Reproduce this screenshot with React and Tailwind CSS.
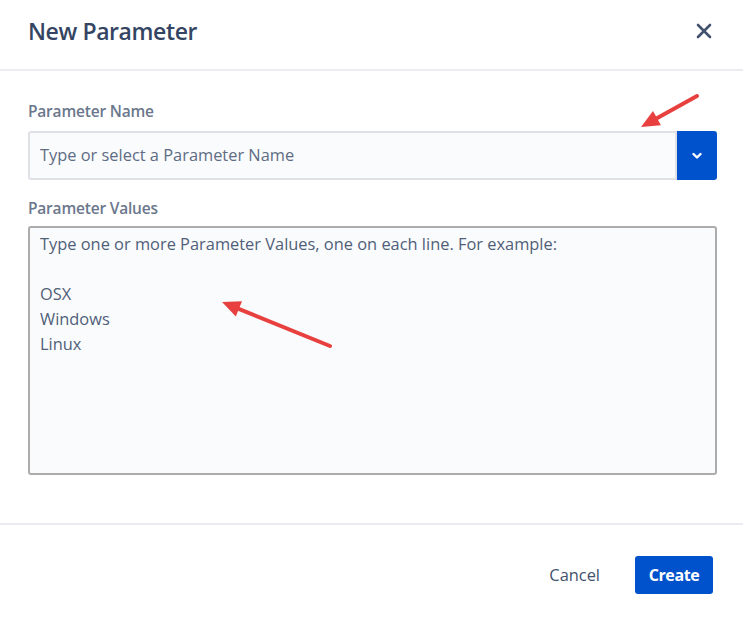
import React from 'react';

const font = { fontFamily: '"Open Sans", "Noto Sans", sans-serif' };

const Arrow = ({ x1, y1, x2, y2 }) => {
  // draws a red annotation arrow pointing at (x2, y2)
  const angle = Math.atan2(y2 - y1, x2 - x1);
  const len = 20;
  const spread = 0.42;
  const ax = x2 - len * Math.cos(angle - spread);
  const ay = y2 - len * Math.sin(angle - spread);
  const bx = x2 - len * Math.cos(angle + spread);
  const by = y2 - len * Math.sin(angle + spread);
  const sx = x2 - 14 * Math.cos(angle);
  const sy = y2 - 14 * Math.sin(angle);
  return (
    <g>
      <line x1={x1} y1={y1} x2={sx} y2={sy} stroke="#e8403f" strokeWidth="4" strokeLinecap="round" />
      <polygon points={`${x2},${y2} ${ax},${ay} ${bx},${by}`} fill="#e8403f" />
    </g>
  );
};

export default function App() {
  return (
    <div className="relative w-[743px] h-[619px] bg-white overflow-hidden" style={font}>
      <div className="flex items-center justify-between h-[71px] px-[28px] pb-[8px] border-b-2 border-[#ebecf0]">
        <h1 className="text-[23px] leading-[32px] font-semibold tracking-[-0.4px] text-[#344563]">New Parameter</h1>
        <button className="w-[24px] h-[24px] flex items-center justify-center -mr-[1px]">
          <svg width="16" height="16" viewBox="0 0 16 16">
            <path d="M2 2 L14 14 M14 2 L2 14" stroke="#42526e" strokeWidth="2.6" strokeLinecap="round" />
          </svg>
        </button>
      </div>

      <div className="px-[28px] pt-[30px] pb-[48px] border-b-2 border-[#ebecf0] pr-[26px]">
        <label className="block text-[15.5px] leading-[20px] font-semibold tracking-[-0.2px] text-[#6b778c] mb-[10px]">
          Parameter Name
        </label>
        <div className="flex h-[49px]">
          <div className="flex-1 flex items-center bg-[#fafbfc] border-2 border-[#dfe1e6] rounded-l-[3px] px-[10px] text-[16.4px] text-[#5e6c84]">
            Type or select a Parameter Name
          </div>
          <button className="w-[40px] bg-[#0052cc] rounded-r-[3px] flex items-center justify-center">
            <svg width="10" height="8" viewBox="0 0 10 8">
              <path d="M1.5 2 L5 5.5 L8.5 2" stroke="white" strokeWidth="2.4" fill="none" strokeLinecap="round" strokeLinejoin="round" />
            </svg>
          </button>
        </div>

        <label className="block text-[15.5px] leading-[20px] font-semibold tracking-[-0.2px] text-[#6b778c] mt-[18px] mb-[8px]">
          Parameter Values
        </label>
        <div className="h-[249px] bg-[#fafbfc] border-2 border-[#acacac] rounded-[3px] px-[10px] py-[3px] text-[16.4px] leading-[25px] text-[#505f79]">
          <div>Type one or more Parameter Values, one on each line. For example:</div>
          <div>&nbsp;</div>
          <div>OSX</div>
          <div>Windows</div>
          <div>Linux</div>
        </div>
      </div>

      <div className="flex items-center justify-end gap-[35px] pt-[31px] pr-[30px]">
        <button className="text-[16.4px] text-[#42526e]">Cancel</button>
        <button className="h-[38px] w-[78px] flex items-center justify-center bg-[#0052cc] rounded-[3px] text-white text-[16px] font-bold tracking-[-0.4px]">
          Create
        </button>
      </div>

      <svg className="absolute inset-0 pointer-events-none" width="743" height="619">
        <Arrow x1={697} y1={96} x2={641} y2={127} />
        <Arrow x1={330} y1={346} x2={222} y2={302} />
      </svg>
    </div>
  );
}
